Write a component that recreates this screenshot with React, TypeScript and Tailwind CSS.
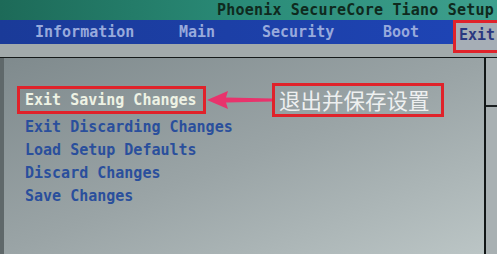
const mono = { fontFamily: '"DejaVu Sans Mono", "Liberation Mono", monospace' };

const tabs = [
  { label: "Information", x: "w-[179px] pl-[35px]" },
  { label: "Main", x: "w-[83px]" },
  { label: "Security", x: "w-[121px]" },
  { label: "Boot", x: "w-[70px]" },
];

const items = ["Exit Discarding Changes", "Load Setup Defaults", "Discard Changes", "Save Changes"];

function Arrow() {
  return (
    <svg width="66" height="22" viewBox="0 0 66 22" className="shrink-0">
      <path d="M66 9.5 L20 8.5 L22 2 L1 11 L22 20 L20 13.5 L66 12.5 Z" fill="#e8336c" />
    </svg>
  );
}

export default function App() {
  return (
    <div className="w-[497px] h-[254px] overflow-hidden flex flex-col bg-[#8e989a]" style={mono}>
      <div className="h-[20px] shrink-0 bg-gradient-to-r from-[#1d6a58] via-[#2a8c78] to-[#3ea08e] flex items-center pl-[217px]">
        <span className="text-[15px] font-bold text-[#0f2a1e] whitespace-nowrap leading-none tracking-[0.2px]">
          Phoenix SecureCore Tiano Setup
        </span>
      </div>

      <div className="h-[37px] shrink-0 flex bg-[#a2aaab]">
        <div className="flex-1 flex flex-col">
          <div className="h-[24px] bg-gradient-to-r from-[#1a3a98] to-[#1e44b4] flex items-center text-[15px] font-bold text-[#98aadc] leading-none">
            {tabs.map((t) => (
              <div key={t.label} className={`${t.x} shrink-0`}>
                {t.label}
              </div>
            ))}
          </div>
        </div>
        <div className="w-[45px] h-[33px] border-[3px] border-r-0 border-[#e0222a] bg-[#a6aeb6] pl-[3px] pt-[5px] text-[15px] font-bold text-[#2a3880] leading-none">
          Exit
        </div>
      </div>
      <div className="h-[1px] shrink-0 bg-[#151a1a]" />

      <div className="flex-1 flex bg-gradient-to-br from-[#7f8a8d] via-[#9aa4a6] to-[#bcc6c6]">
        <div className="w-[486px] shrink-0 border-l-[4px] border-[#5f686a] border-r-[2px] border-r-[#111616] pl-[13px] pt-[25px]">
          <div className="flex items-center h-[34px]">
            <div className="h-[28px] w-[189px] border-[3px] border-[#e0222a] pl-[5px] flex items-center text-[15px] font-bold text-[#eef2e4] leading-none whitespace-nowrap">
              Exit Saving Changes
            </div>
            <Arrow />
            <div className="h-[34px] w-[172px] border-[3px] border-[#e0222a] flex items-center pl-[4px] text-[21.5px] text-[#eef0f0] leading-none whitespace-nowrap" style={{ fontFamily: '"Noto Sans CJK SC", sans-serif' }}>
              退出并保存设置
            </div>
          </div>
          <div className="pl-[8px] -mt-[1px] flex flex-col">
            {items.map((it) => (
              <div key={it} className="h-[23px] flex items-center text-[15px] font-bold text-[#2a4f9c] whitespace-nowrap leading-none">
                {it}
              </div>
            ))}
          </div>
        </div>
        <div className="flex-1 flex flex-col bg-[#a8b0b2]">
          <div className="h-[49px] border-b-[2px] border-[#1a1f20]" />
        </div>
      </div>
    </div>
  );
}
